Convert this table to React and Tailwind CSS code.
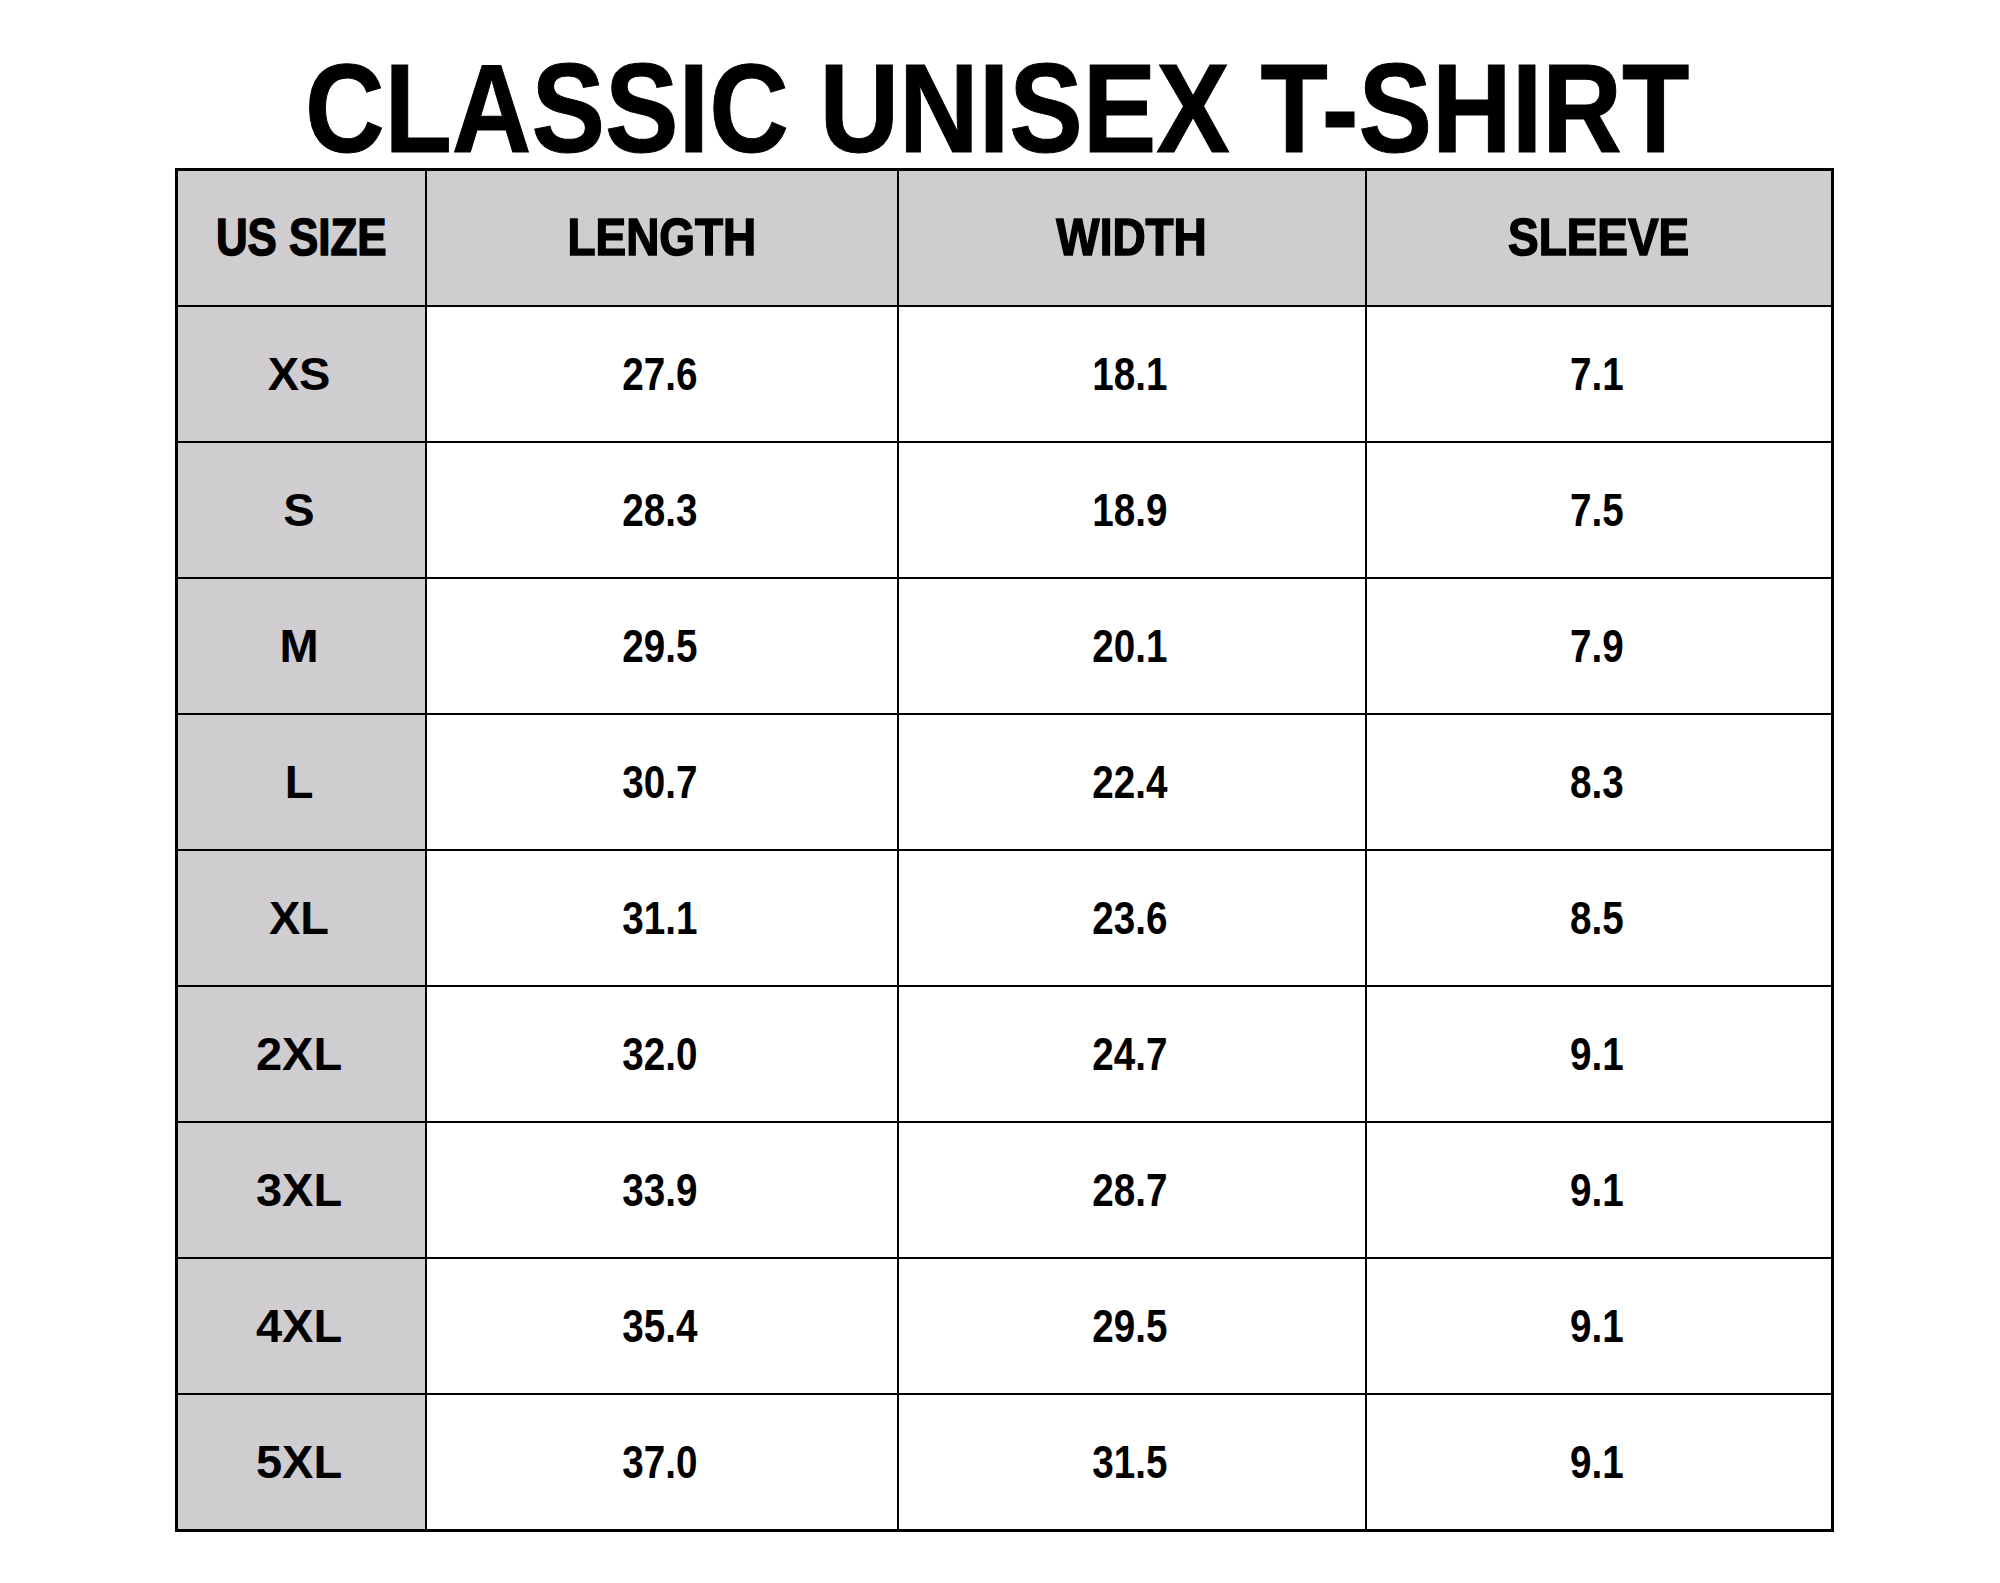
import React from 'react';

const rows = [
  { size: 'XS', length: '27.6', width: '18.1', sleeve: '7.1' },
  { size: 'S', length: '28.3', width: '18.9', sleeve: '7.5' },
  { size: 'M', length: '29.5', width: '20.1', sleeve: '7.9' },
  { size: 'L', length: '30.7', width: '22.4', sleeve: '8.3' },
  { size: 'XL', length: '31.1', width: '23.6', sleeve: '8.5' },
  { size: '2XL', length: '32.0', width: '24.7', sleeve: '9.1' },
  { size: '3XL', length: '33.9', width: '28.7', sleeve: '9.1' },
  { size: '4XL', length: '35.4', width: '29.5', sleeve: '9.1' },
  { size: '5XL', length: '37.0', width: '31.5', sleeve: '9.1' },
];

const headers = ['US SIZE', 'LENGTH', 'WIDTH', 'SLEEVE'];

const App = () => {
  return (
    <div className="w-[2000px] h-[1583px] bg-white flex flex-col items-center pt-[50px]">
      {/* Title */}
      <h1 className="font-['Liberation_Sans',Arial,sans-serif] font-bold text-[126px] leading-[118px] text-black scale-x-[0.875] whitespace-nowrap ml-[-6px] [-webkit-text-stroke:1px_black]">
        CLASSIC UNISEX T-SHIRT
      </h1>

      {/* Size table */}
      <div className="ml-[8px] border-[3px] border-black grid grid-cols-[247px_472px_468px_466px]">
        {headers.map((h, i) => (
          <div
            key={h}
            className={`h-[134px] bg-[#cfcdcf] flex items-center justify-center font-['Liberation_Sans',Arial,sans-serif] font-bold text-[51px] text-black ${i > 0 ? 'border-l-2 border-black' : ''}`}
          >
            <span className={`inline-block whitespace-nowrap [-webkit-text-stroke:1.5px_black] ${i === 0 ? 'scale-x-[0.86]' : 'scale-x-[0.9]'}`}>{h}</span>
          </div>
        ))}
        {rows.map((r) => (
          <React.Fragment key={r.size}>
            <div className="h-[136px] border-t-2 border-black bg-[#cfcdcf] flex items-center justify-center font-['Liberation_Sans',Arial,sans-serif] font-bold text-[47px] text-black">
              <span className="ml-[-4px]">{r.size}</span>
            </div>
            {[r.length, r.width, r.sleeve].map((v, j) => (
              <div
                key={j}
                className="h-[136px] border-t-2 border-l-2 border-black bg-white flex items-center justify-center font-['Liberation_Sans',Arial,sans-serif] font-bold text-[46px] text-black"
              >
                <span className="inline-block scale-x-[0.84] ml-[-4px]">{v}</span>
              </div>
            ))}
          </React.Fragment>
        ))}
      </div>
    </div>
  );
};

export default App;
